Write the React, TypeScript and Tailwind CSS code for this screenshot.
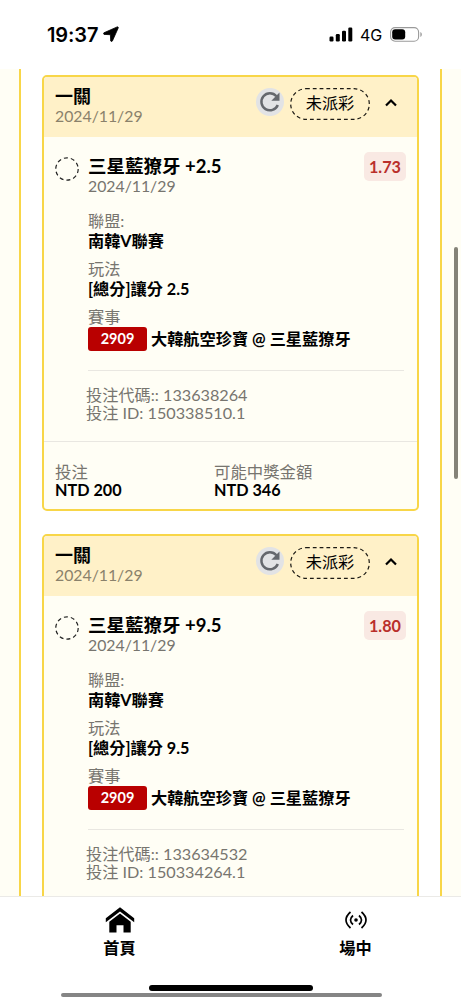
import React from 'react';

interface Bet {
  pick: string;
  odds: string;
  play: string;
  code: string;
  id: string;
  stake?: string;
  payout?: string;
}

const bets: Bet[] = [
  {
    pick: '三星藍獠牙 +2.5',
    odds: '1.73',
    play: '[總分]讓分 2.5',
    code: '133638264',
    id: '150338510.1',
    stake: 'NTD 200',
    payout: 'NTD 346',
  },
  { pick: '三星藍獠牙 +9.5', odds: '1.80', play: '[總分]讓分 9.5', code: '133634532', id: '150334264.1' },
];

const StatusBar: React.FC = () => (
  <div className="flex h-[69px] shrink-0 items-start justify-between bg-white pl-[47px] pr-[38px] pt-[22px]">
    <div className="flex h-6 items-center gap-[5px]">
      <span className="mt-[2px] w-[51px] font-['Inter'] text-[20px] font-semibold tracking-[-0.1px]">19:37</span>
      <svg className="h-4 w-4" viewBox="0 0 16 16">
        <path d="M14.200.9 L.9 6.800 Q0 7.700 1 8.400 L7.400 8.700 L7.700 15 Q8.500 16 9.400 15 L15.300 1.800 Q15.300.6 14.200.9Z" stroke="#000" strokeWidth="0.800" />
      </svg>
    </div>
    <div className="flex h-6 items-center">
      <svg className="h-[15px] w-[24px]" viewBox="0 0 24 15">
        <rect x="0.5" y="9.5" width="4" height="5" rx="1.2" />
        <rect x="6.8" y="7" width="4" height="7.5" rx="1.2" />
        <rect x="13" y="3.8" width="4" height="10.7" rx="1.2" />
        <rect x="19.3" y="0.5" width="4" height="14" rx="1.2" />
      </svg>
      <span className="ml-[7px] mt-[2px] w-[22px] font-['Inter'] text-[16px] tracking-[-0.2px]">4G</span>
      <svg className="ml-2 h-[15px] w-[33px]" viewBox="0 0 33 15">
        <rect x="0.6" y="0.6" width="28" height="13.6" rx="4.5" fill="none" stroke="#9a9a9a" strokeWidth="1.1" />
        <rect x="2.2" y="2.2" width="13" height="10.4" rx="3" />
        <path d="M30.3 5v5c1-.4 1.6-1.4 1.6-2.5S31.300 5.400 30.300 5z" fill="#a0a0a0" />
      </svg>
    </div>
  </div>
);

const Field: React.FC<{ label: string; children: React.ReactNode }> = ({ label, children }) => (
  <div className="mb-2">
    <div className="h-5 leading-5 text-[#77756f]">{label}</div>
    <div className="h-5 font-bold leading-5">{children}</div>
  </div>
);

const BetCard: React.FC<{ bet: Bet }> = ({ bet }) => (
  <div className="mb-[23px] h-[436px] shrink-0 overflow-hidden rounded-[5px] border-2 border-[#f8d648] bg-[#fffef5]">
    {/* Header */}
    <div className="flex h-[60px] items-center bg-[#fff1c8] pl-[11px] pr-[19px]">
      <div className="mb-[2px] flex-1">
        <div className="h-5 text-[18px] font-bold leading-5">一關</div>
        <div className="h-5 text-[15.800px] leading-5 text-[#8a816b]">2024/11/29</div>
      </div>
      <div className="mb-[7px] flex items-center">
        <span className="mb-[3px] flex h-7 w-7 items-center justify-center rounded-full bg-[#e2e3e5]">
          <svg className="h-[22px] w-[22px]" viewBox="0 0 22 22" fill="none">
            <path d="M18.800 14a8.500 8.500 0 1 1-1.400-8.700" stroke="#65686d" strokeWidth="2.500" />
            <path d="M20.500 1.500v8.200h-8.200z" fill="#65686d" />
          </svg>
        </span>
        <span className="relative ml-[6px] flex h-[32px] w-[80px] items-center justify-center">
          <svg className="absolute inset-0 h-full w-full" viewBox="0 0 80 32" fill="none">
            <rect x="0.700" y="0.700" width="78.600" height="30.600" rx="15.300" stroke="#1c1a14" strokeWidth="1.200" strokeDasharray="3.800 3" />
          </svg>
          <span>未派彩</span>
        </span>
        <svg className="mb-[2px] ml-[14px] h-4 w-[14px]" viewBox="0 0 14 16" fill="none">
          <path d="M2 10.500l5-5 5 5" stroke="#000" strokeWidth="2.200" />
        </svg>
      </div>
    </div>

    {/* Selection */}
    <div className="relative pl-[44px] pr-[13px] pt-[19px]">
      <svg className="absolute left-[11px] top-[20px] h-6 w-6" viewBox="0 0 24 24" fill="none">
        <circle cx="12" cy="12" r="11.200" stroke="#222" strokeWidth="1.200" strokeDasharray="4 3.040" />
      </svg>
      <div className="flex items-start justify-between">
        <div>
          <div className="h-5 text-[18.500px] font-bold leading-5">{bet.pick}</div>
          <div className="h-[26px] text-[15.800px] leading-5 text-[#77756f]">2024/11/29</div>
        </div>
        <span className="-mt-[4px] mr-[-2px] flex h-[29px] w-[42px] items-center justify-center rounded-[5px] bg-[#f9e9e3] pt-[1px] font-bold text-[#b92f2b]">
          {bet.odds}
        </span>
      </div>
      <div className="mt-[9px]">
        <Field label="聯盟:">南韓V聯賽</Field>
        <Field label="玩法">{bet.play}</Field>
        <Field label="賽事">
          <div className="flex items-center">
            <span className="mr-[4px] flex h-6 w-[59px] shrink-0 items-center justify-center rounded-[3px] bg-[#b90000] text-[14.500px] text-white">2909</span>
            <span className="whitespace-nowrap">大韓航空珍寶 @ 三星藍獠牙</span>
          </div>
        </Field>
      </div>
      <div className="mt-[23px] border-t border-[#e9e7e1]" />
      <div className="ml-[-2px] mt-[15px] h-[55px] text-[16.200px] leading-[18px] text-[#77756f]">
        <div>投注代碼:: {bet.code}</div>
        <div>投注 ID: {bet.id}</div>
      </div>
    </div>

    {/* Amounts */}
    {bet.stake && (
      <div className="grid grid-cols-[159px_1fr] border-t border-[#e9e7e1] pl-[11px] pt-[21px] leading-[18px]">
        <div>
          <div className="text-[16.400px] text-[#77756f]">投注</div>
          <div className="font-bold">{bet.stake}</div>
        </div>
        <div>
          <div className="text-[16.400px] text-[#77756f]">可能中獎金額</div>
          <div className="font-bold">{bet.payout}</div>
        </div>
      </div>
    )}
  </div>
);

const BottomNav: React.FC = () => (
  <div className="h-[104px] shrink-0 border-t border-[#ebeae7] bg-white">
    <div className="flex justify-between pl-[103px] pr-[89px] pt-[10px] font-bold">
      <div className="flex w-[33px] flex-col items-center">
        <svg className="h-7 w-[30px]" viewBox="0 0 30 28">
          <path d="M15 .2L.8 11.200v4L15 4.500l14.200 10.700v-4z" />
          <path d="M15 6.400L4.300 14.700V25.500h7.200v-7.300h7v7.300h7.200V14.700z" />
        </svg>
        <span className="mt-[3px] h-5 whitespace-nowrap leading-5">首頁</span>
      </div>
      <div className="flex w-[33px] flex-col items-center">
        <svg className="h-7 w-6" viewBox="0 0 24 28" fill="none" stroke="#000" strokeWidth="1.700">
          <path d="M6.500 5Q-2.500 13 6.500 21M17.500 5Q26.500 13 17.500 21" />
          <path d="M9 8.500Q4 13 9 17.500M15 8.500Q20 13 15 17.500" />
          <circle cx="12" cy="13" r="1.800" fill="#000" stroke="none" />
        </svg>
        <span className="mt-[3px] h-5 whitespace-nowrap leading-5">場中</span>
      </div>
    </div>
    <div className="ml-[149px] mt-[27px] h-[6px] w-[164px] rounded-full bg-black" />
    <div className="ml-[61px] mt-[2px] h-[4px] w-[321px] rounded-full bg-[#858585]" />
  </div>
);

const App: React.FC = () => {
  return (
    <div className="relative flex h-[1000px] w-[461px] flex-col overflow-hidden bg-white font-['Lato','Noto_Sans_CJK_TC',sans-serif] text-[16.200px] text-black">
      <StatusBar />
      <div className="min-h-0 flex-1 overflow-hidden bg-[#fffef5] px-[19px]">
        <div className="flex h-full flex-col overflow-hidden border-x-2 border-[#f8d648] bg-white px-[21px] pt-[6px]">
          {bets.map((bet) => (
            <BetCard key={bet.id} bet={bet} />
          ))}
        </div>
      </div>
      <BottomNav />
      {/* Scroll indicator */}
      <div className="absolute left-[454px] top-[247px] h-[232px] w-1 rounded-full bg-[#858378]" />
    </div>
  );
};

export default App;
